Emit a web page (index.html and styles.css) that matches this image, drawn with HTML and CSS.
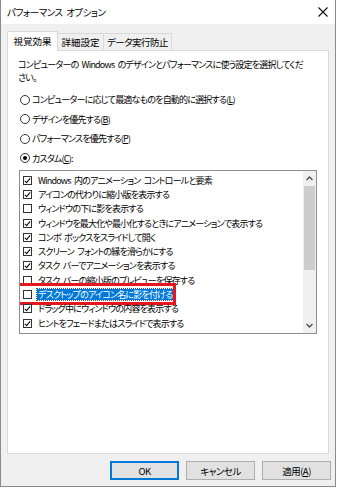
FILE: index.html
```html
<!DOCTYPE html>
<html lang="ja">
<head>
  <meta charset="UTF-8">
  <meta name="viewport" content="width=device-width, initial-scale=1.0">
  <title>パフォーマンス オプション</title>
  <link rel="stylesheet" href="styles.css">
</head>
<body>
  <!-- ダイアログ本体 -->
  <div class="window">
    <div class="titlebar">
      <span class="title">パフォーマンス オプション</span>
      <svg class="close" width="10" height="10" viewBox="0 0 10 10">
        <path d="M0.5 0.5 L9.5 9.5 M9.5 0.5 L0.5 9.5" stroke="#111" stroke-width="1.1" fill="none"/>
      </svg>
    </div>

    <!-- タブ -->
    <div class="tabs">
      <div class="tab active">視覚効果</div>
      <div class="tab t2">詳細設定</div>
      <div class="tab t3">データ実行防止</div>
    </div>

    <div class="panel">
      <p class="desc">コンピューターの Windows のデザインとパフォーマンスに使う設定を選択してくだ<br>さい。</p>

      <div class="radios">
        <div class="radio"><span class="dot"></span>コンピューターに応じて最適なものを自動的に選択する(<u>L</u>)</div>
        <div class="radio"><span class="dot"></span>デザインを優先する(<u>B</u>)</div>
        <div class="radio"><span class="dot"></span>パフォーマンスを優先する(<u>P</u>)</div>
        <div class="radio"><span class="dot on"></span>カスタム(<u>C</u>):</div>
      </div>

      <!-- 視覚効果のリスト -->
      <div class="list">
        <ul class="items">
          <li class="item"><span class="box on"></span><span class="label">Windows 内のアニメーション コントロールと要素</span></li>
          <li class="item"><span class="box on"></span><span class="label">アイコンの代わりに縮小版を表示する</span></li>
          <li class="item"><span class="box"></span><span class="label">ウィンドウの下に影を表示する</span></li>
          <li class="item"><span class="box on"></span><span class="label">ウィンドウを最大化や最小化するときにアニメーションで表示する</span></li>
          <li class="item"><span class="box on"></span><span class="label">コンボ ボックスをスライドして開く</span></li>
          <li class="item"><span class="box on"></span><span class="label">スクリーン フォントの縁を滑らかにする</span></li>
          <li class="item"><span class="box on"></span><span class="label">タスク バーでアニメーションを表示する</span></li>
          <li class="item"><span class="box"></span><span class="label">タスク バーの縮小版のプレビューを保存する</span></li>
          <li class="item selected"><span class="box"></span><span class="label">デスクトップのアイコン名に影を付ける</span><span class="mark"></span></li>
          <li class="item"><span class="box on"></span><span class="label">ドラッグ中にウィンドウの内容を表示する</span></li>
          <li class="item"><span class="box on"></span><span class="label">ヒントをフェードまたはスライドで表示する</span></li>
          <li class="item"><span class="box on"></span><span class="label">マウス ポインターの下に影を表示する</span></li>
        </ul>
        <div class="scrollbar">
          <div class="arrow">
            <svg width="7" height="5" viewBox="0 0 7 5"><path d="M0.5 4 L3.5 1 L6.5 4" stroke="#505050" stroke-width="1.3" fill="none"/></svg>
          </div>
          <div class="track"><div class="thumb"></div></div>
          <div class="arrow">
            <svg width="7" height="5" viewBox="0 0 7 5"><path d="M0.5 1 L3.5 4 L6.5 1" stroke="#505050" stroke-width="1.3" fill="none"/></svg>
          </div>
        </div>
      </div>
    </div>

    <!-- ボタン -->
    <div class="buttons">
      <button class="btn default">OK</button>
      <button class="btn">キャンセル</button>
      <button class="btn">適用(<u>A</u>)</button>
    </div>
  </div>
</body>
</html>
```

FILE: styles.css
```css
/* 全体 */
body {
  margin: 0;
  background: #fff;
  font-family: "Noto Sans CJK JP", "Noto Sans", sans-serif;
  font-size: 9.5px;
  letter-spacing: -0.5px;
  word-spacing: 2px;
  font-feature-settings: "palt";
  color: #000;
}

/* ウィンドウ枠 */
.window {
  width: 336px;
  height: 487px;
  box-sizing: border-box;
  border: 1px solid #8c8c8c;
  border-top: none;
  background: #f0f0f0;
  display: flex;
  flex-direction: column;
  overflow: hidden;
}

/* タイトルバー */
.titlebar {
  height: 24px;
  flex: none;
  background: #fff;
  display: flex;
  align-items: center;
  justify-content: space-between;
  padding: 0 7px 0 6px;
}

.title {
  line-height: 12px;
}

/* タブ */
.tabs {
  display: flex;
  align-items: flex-end;
  margin: 7px 0 0 6px;
  letter-spacing: 0;
}

.tab {
  box-sizing: border-box;
  height: 17px;
  border: 1px solid #d9d9d9;
  border-bottom: none;
  background: #f0f0f0;
  text-align: center;
  line-height: 17px;
  margin-left: -1px;
  white-space: nowrap;
}

.tab.active {
  position: relative;
  z-index: 1;
  width: 51px;
  height: 20px;
  margin-left: 0;
  margin-bottom: -1px;
  background: #fff;
  line-height: 19px;
}

.tab.t2 {
  width: 47px;
}

.tab.t3 {
  width: 69px;
  letter-spacing: -0.5px;
}

/* タブの中身 */
.panel {
  margin: 0 6px;
  height: 404px;
  flex: none;
  box-sizing: border-box;
  background: #fff;
  border: 1px solid #d9d9d9;
  padding: 7px 0 0 10px;
  font-size: 9px;
  letter-spacing: -0.8px;
}

.desc {
  margin: 0;
  line-height: 13px;
  white-space: nowrap;
}

.radios {
  margin-top: 6px;
}

.radio {
  height: 19.5px;
  display: flex;
  align-items: center;
  padding-left: 2px;
  white-space: nowrap;
}

.dot {
  width: 10px;
  height: 10px;
  box-sizing: border-box;
  border: 1px solid #333;
  border-radius: 50%;
  margin-right: 2px;
  display: flex;
  align-items: center;
  justify-content: center;
  flex: none;
}

.dot.on::after {
  content: "";
  width: 4px;
  height: 4px;
  border-radius: 50%;
  background: #000;
}

/* リストボックス */
.list {
  margin: 2px 0 0 1px;
  width: 298px;
  height: 164px;
  box-sizing: border-box;
  border: 1px solid #8e8f8f;
  display: flex;
}

.items {
  flex: 1;
  min-width: 0;
  margin: 0;
  padding: 2px 0 0;
  list-style: none;
  overflow: hidden;
}

.item {
  position: relative;
  height: 14.3px;
  display: flex;
  align-items: center;
  padding-left: 3px;
  white-space: nowrap;
}

.box {
  width: 9px;
  height: 9px;
  box-sizing: border-box;
  border: 1px solid #333;
  margin-right: 5px;
  flex: none;
  position: relative;
}

.box.on::after {
  content: "";
  position: absolute;
  left: 2px;
  top: 0;
  width: 2px;
  height: 5px;
  border-right: 1px solid #000;
  border-bottom: 1px solid #000;
  transform: rotate(40deg);
}

.label {
  padding: 0 1px;
  line-height: 11px;
}

.item.selected .label {
  background: #0078d7;
  color: #fff;
  outline: 1px dotted #555;
}

/* 赤い囲み */
.mark {
  position: absolute;
  left: -4px;
  top: -4px;
  width: 160px;
  height: 22px;
  box-sizing: border-box;
  border: 3px solid #e5161d;
}

/* スクロールバー */
.scrollbar {
  width: 13px;
  flex: none;
  background: #f0f0f0;
  display: flex;
  flex-direction: column;
}

.arrow {
  height: 15px;
  flex: none;
  display: flex;
  align-items: center;
  justify-content: center;
}

.track {
  flex: 1;
}

.thumb {
  height: 84px;
  margin: 0 1px;
  background: #cdcdcd;
}

/* 下部ボタン */
.buttons {
  display: flex;
  justify-content: flex-end;
  gap: 7px;
  margin-top: 7px;
  padding-right: 4px;
}

.btn {
  width: 69px;
  height: 19px;
  box-sizing: border-box;
  border: 1px solid #adadad;
  background: #e1e1e1;
  font-family: inherit;
  font-size: 9.5px;
  letter-spacing: -0.5px;
  font-feature-settings: "palt";
  padding: 0;
  color: #000;
}

.btn.default {
  border-color: #0078d7;
  box-shadow: inset 0 0 0 1px #0078d7;
}
```
